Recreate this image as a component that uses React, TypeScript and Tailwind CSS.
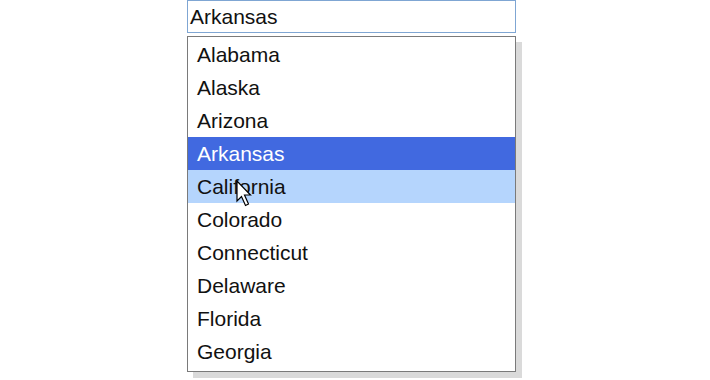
import React from "react";

const states = [
  "Alabama",
  "Alaska",
  "Arizona",
  "Arkansas",
  "California",
  "Colorado",
  "Connecticut",
  "Delaware",
  "Florida",
  "Georgia",
];

export default function App() {
  return (
    <div className="w-[710px] h-[380px] bg-white overflow-hidden" style={{ fontFamily: '"Liberation Sans", Arial, sans-serif' }}>
      <div className="ml-[187px] w-[329px] flex flex-col">
        <div className="h-[33px] border border-[#7fa6d3] pl-[2px] flex items-center text-[21px] text-[#111] leading-none">
          Arkansas
        </div>
        <div className="relative mt-[3px] border border-[#7a7a7a] bg-white pt-px pb-[3px] shadow-[6px_6px_0_#dadada]">
          {states.map((s) => {
            const cls =
              s === "Arkansas"
                ? "bg-[#4169e0] text-white"
                : s === "California"
                ? "bg-[#b5d5fd] text-[#111]"
                : "text-[#111]";
            return (
              <div key={s} className={`h-[33px] leading-[33px] pl-[9px] text-[21px] ${cls}`}>
                {s}
              </div>
            );
          })}
          <svg
            className="absolute left-[48px] top-[143px]"
            width="18"
            height="28"
            viewBox="0 0 18 28"
          >
            <path
              d="M1 1 L1 21 L5.5 16.5 L9.5 25.5 L12.5 24 L8.5 15 L14.5 15 Z"
              fill="white"
              stroke="black"
              strokeWidth="1.2"
              strokeLinejoin="miter"
            />
          </svg>
        </div>
      </div>
    </div>
  );
}
